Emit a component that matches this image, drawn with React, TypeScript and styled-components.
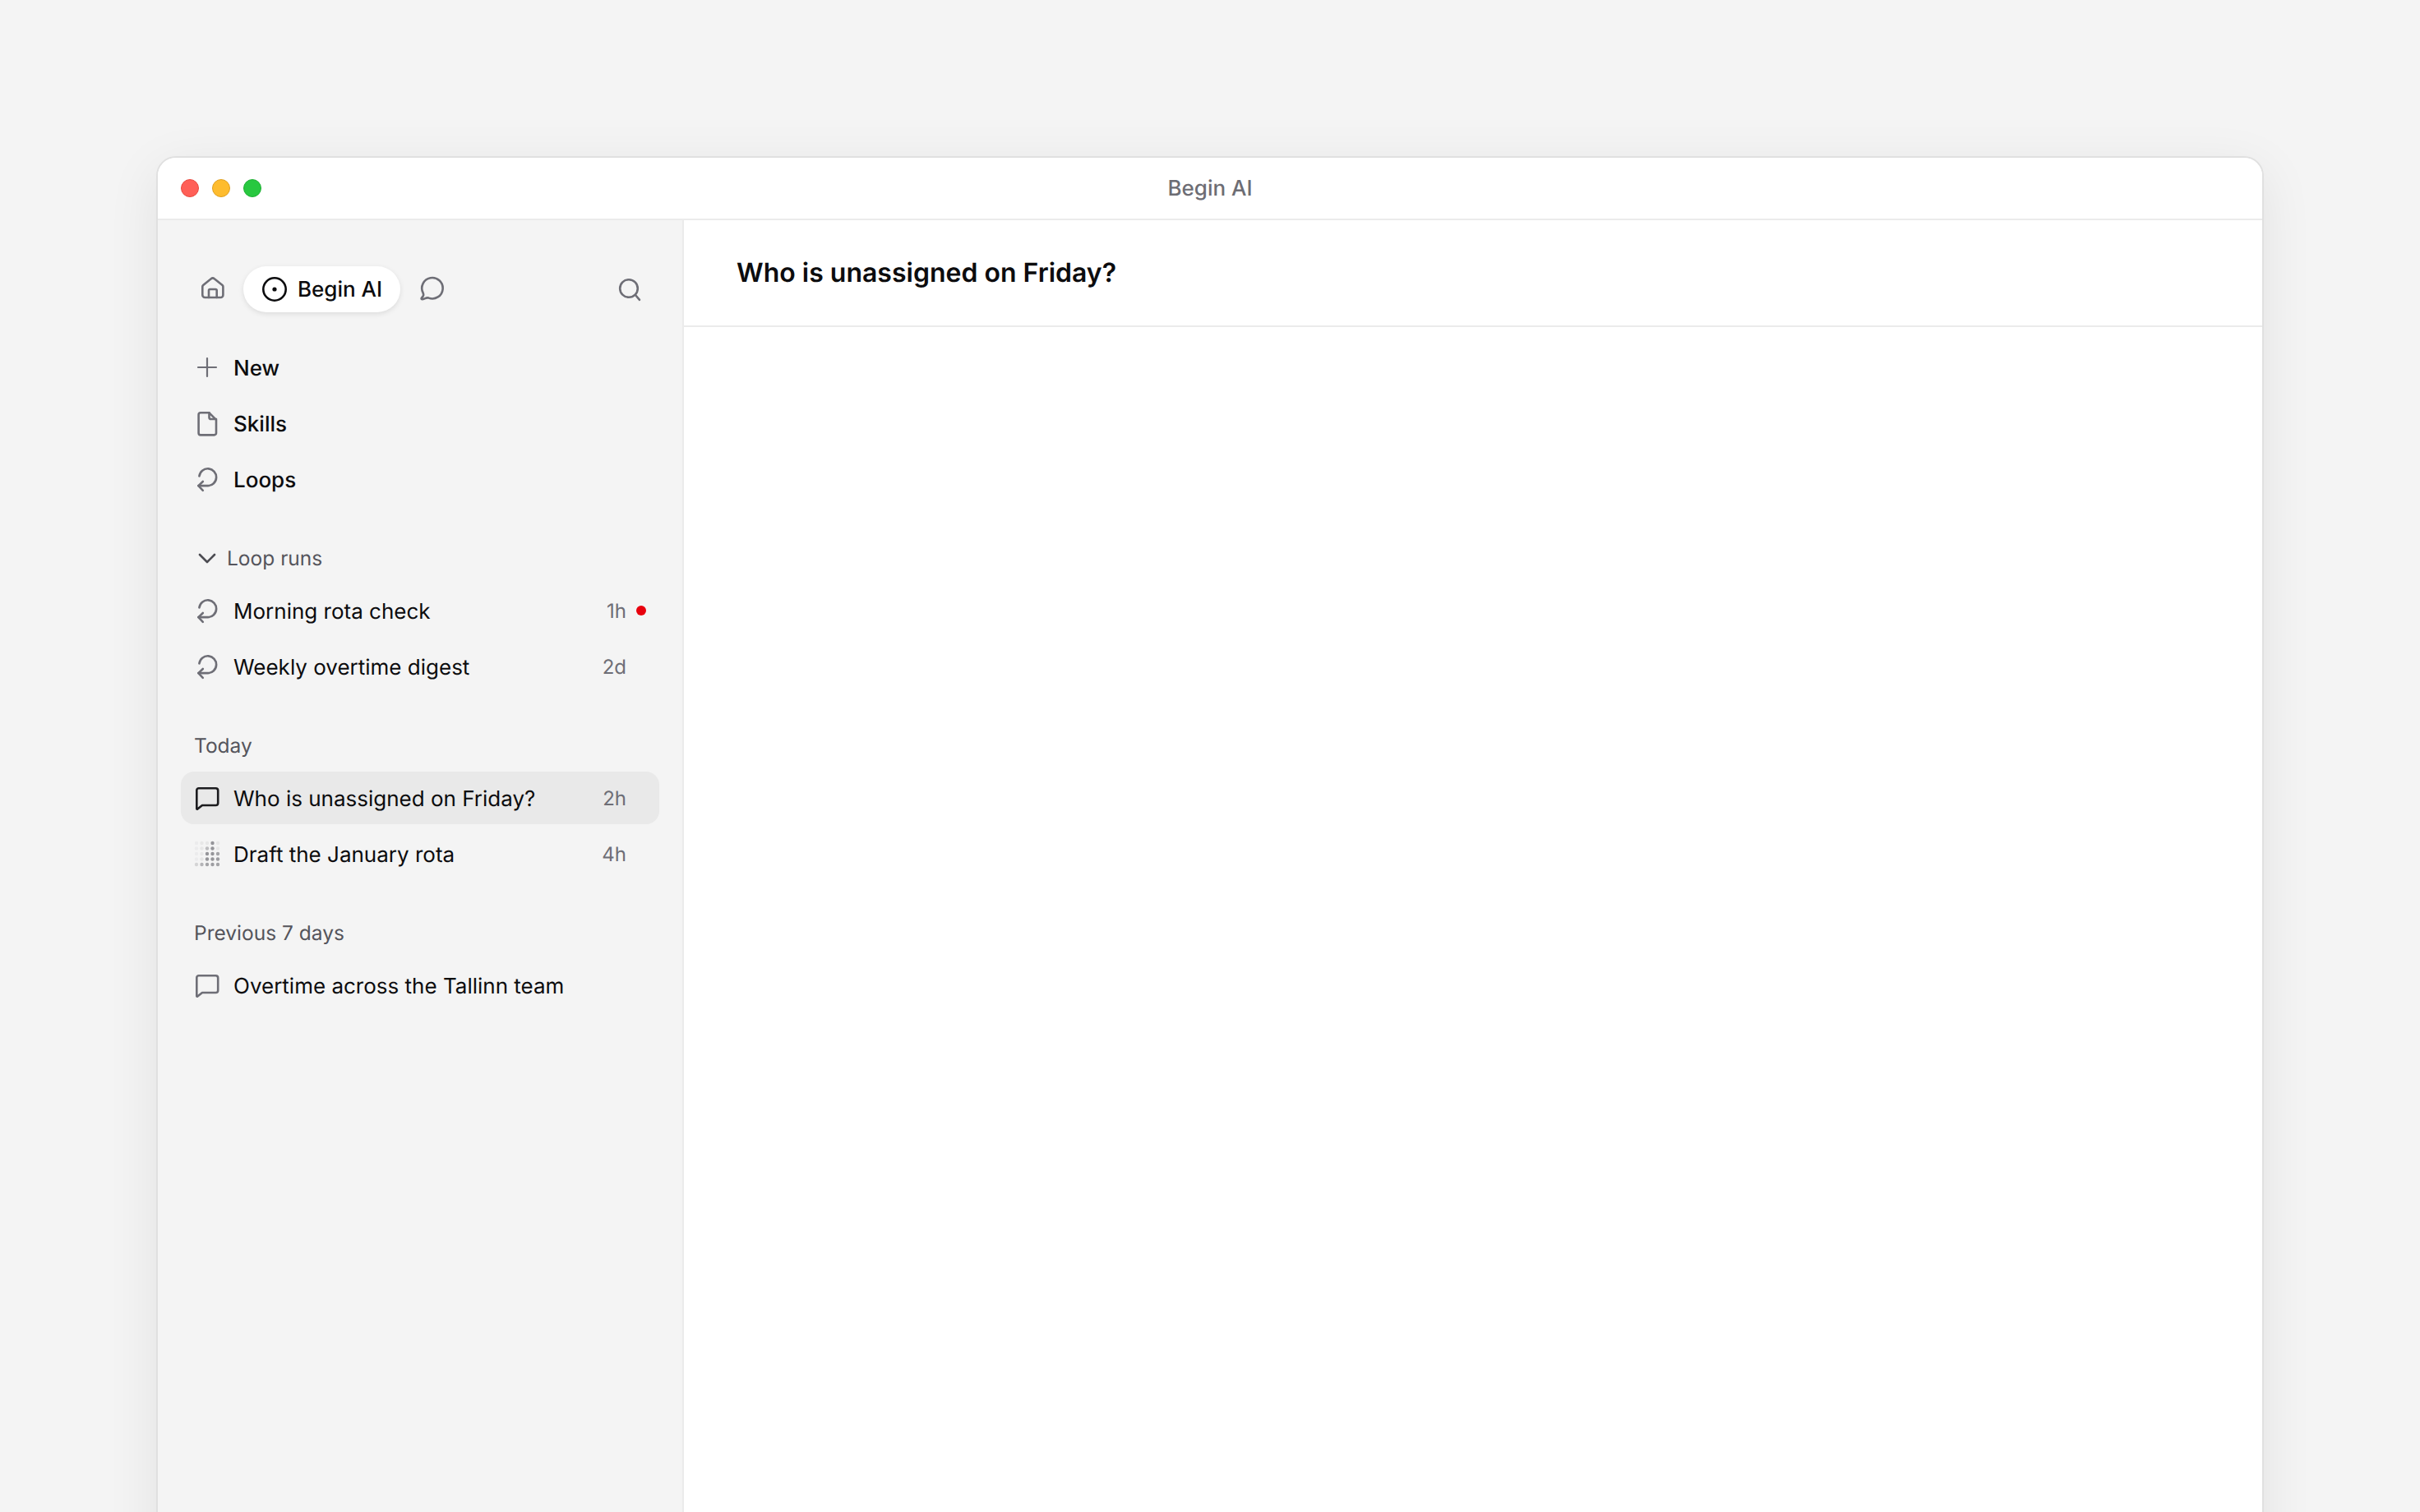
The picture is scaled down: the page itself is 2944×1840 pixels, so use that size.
import React from 'react';
import styled, { createGlobalStyle } from 'styled-components';

const GlobalStyle = createGlobalStyle`
  html, body {
    margin: 0;
    padding: 0;
    height: 1840px;
    overflow: hidden;
    background: #f4f4f4;
    text-rendering: geometricPrecision;
    -webkit-font-smoothing: antialiased;
  }
  * { box-sizing: border-box; }
`;

const iconProps = {
  viewBox: '0 0 32 32',
  fill: 'none',
  stroke: 'currentColor',
  strokeWidth: 2.6,
  strokeLinecap: 'round' as const,
  strokeLinejoin: 'round' as const,
};

const HomeIcon = () => (
  <svg {...iconProps} width="32" height="32">
    <path d="M4.300 12.800c0-.8.3-1.400.9-1.900L14.800 3.200a3 3 0 0 1 4 0l9.700 7.700c.6.5.9 1.100.9 1.900V23a3 3 0 0 1-3 3H7.300a3 3 0 0 1-3-3Z" />
    <path d="M12 26V17.500a1.500 1.500 0 0 1 1.500-1.500h6.700a1.500 1.500 0 0 1 1.500 1.500V26" />
  </svg>
);
const TargetIcon = () => (
  <svg {...iconProps} width="32" height="32">
    <circle cx="16" cy="16" r="13.700" />
    <circle cx="16" cy="16" r="2.600" fill="currentColor" stroke="none" />
  </svg>
);
const BubbleIcon = () => (
  <svg {...iconProps} width="32" height="32">
    <path d="M12.500 26.600A12.700 12.700 0 1 0 5.600 20.400c.6 1.300.9 2.400.2 3.800-.5 1-1.500 1.800-2 2.700-.4.8 0 1.400.9 1.400 1.200 0 2.400-.7 3.500-1.200 1.400-.6 2.500-1 4.300-.5Z" />
  </svg>
);
const SearchIcon = () => (
  <svg {...iconProps} width="32" height="32">
    <circle cx="15" cy="15" r="10.800" />
    <path d="M23 23l5 5.800" />
  </svg>
);
const PlusIcon = () => (
  <svg {...iconProps} strokeWidth={2.2} width="32" height="32">
    <path d="M16 5v22M5 16h22" />
  </svg>
);
const FileIcon = () => (
  <svg {...iconProps} width="32" height="32">
    <path d="M8 3.300h10.500L27 11.800V28a2.400 2.400 0 0 1-2.400 2.400H8A2.400 2.400 0 0 1 5.600 28V5.700A2.400 2.400 0 0 1 8 3.300Z" />
    <path d="M18.500 3.300V9a2 2 0 0 0 2 2H27" />
  </svg>
);
const LoopIcon = () => (
  <svg {...iconProps} width="32" height="32">
    <path d="M6.400 12.500A10.400 10.400 0 1 1 16.700 24.100H5.400" />
    <path d="M10.800 19 5.400 24.100l5.400 5.700" />
  </svg>
);
const ChevronIcon = () => (
  <svg {...iconProps} width="28" height="28" viewBox="0 0 28 28">
    <path d="M5 10l9 9 9-9" />
  </svg>
);
const ChatIcon = () => (
  <svg {...iconProps} width="32" height="32">
    <path d="M5.800 4.300h20.600a2.800 2.800 0 0 1 2.800 2.800v15.100a2.800 2.800 0 0 1-2.800 2.800H10L4.300 29.600a.6.6 0 0 1-1-.5V6.800a2.500 2.500 0 0 1 2.500-2.500Z" />
  </svg>
);

const dotLevels = [
  [0.05, 0.08, 0.08, 0.6, 0.08],
  [0.05, 0.08, 0.35, 0.6, 0.08],
  [0.05, 0.08, 0.6, 0.6, 0.5],
  [0.05, 0.1, 0.6, 0.6, 0.55],
  [0.2, 0.4, 0.5, 0.55, 0.5],
];

const DotsIcon = () => (
  <svg width="32" height="32" viewBox="0 0 32 32">
    {dotLevels.map((row, y) =>
      row.map((opacity, x) => (
        <circle key={`${x}-${y}`} cx={3 + x * 6.5} cy={3 + y * 6.5} r="2.200" fill="#55555c" opacity={opacity} />
      ))
    )}
  </svg>
);

const Stage = styled.div`
  padding: 190px 190px 0 190px;
  height: 1840px;
  overflow: hidden;
  background: #f4f4f4;
`;

const Window = styled.div`
  width: 2564px;
  height: 1800px;
  background: #fff;
  border: 2px solid #e0e0e0;
  border-radius: 24px;
  overflow: hidden;
  box-shadow: 0 16px 64px rgba(0, 0, 0, 0.08);
`;

const TitleBar = styled.div`
  position: relative;
  height: 76px;
  display: flex;
  align-items: center;
  justify-content: center;
  border-bottom: 2px solid #ebebeb;
  background: #fff;
`;

const Lights = styled.div`
  position: absolute;
  left: 28px;
  top: 26px;
  display: flex;
  gap: 16px;
`;

const Light = styled.span<{ $color: string; $edge: string }>`
  width: 22px;
  height: 22px;
  border-radius: 50%;
  background: ${(p) => p.$color};
  border: 1px solid ${(p) => p.$edge};
`;

const WindowTitle = styled.div`
  font: 500 26px Inter, sans-serif;
  color: #6d6d74;
`;

const Body = styled.div`
  display: flex;
  height: 1722px;
`;

const Sidebar = styled.aside`
  width: 640px;
  flex-shrink: 0;
  padding: 56px 28px 0 28px;
  background: #f4f4f4;
  border-right: 2px solid #ebebeb;
`;

const TopBar = styled.div`
  display: flex;
  align-items: center;
  height: 56px;
  margin-bottom: 35px;
`;

const TopIcon = styled.span<{ $gap?: number; $end?: number }>`
  display: flex;
  width: 32px;
  height: 32px;
  color: #6e6e76;
  margin-left: ${(p) => p.$gap ?? 0}px;
  margin-right: ${(p) => p.$end ?? 0}px;
`;

const Pill = styled.div`
  display: flex;
  align-items: center;
  gap: 12px;
  height: 56px;
  margin-left: 22px;
  padding: 0 22px;
  border-radius: 28px;
  background: #fff;
  color: #0c0c0e;
  font: 500 26px Inter, sans-serif;
  box-shadow: 0 2px 6px rgba(0, 0, 0, 0.1);
`;

const Spacer = styled.div`
  flex: 1;
`;

const List = styled.div`
  display: flex;
  flex-direction: column;
  gap: 4px;
`;

const Row = styled.div<{ $active?: boolean; $weight?: number }>`
  display: flex;
  align-items: center;
  height: 64px;
  padding-left: 16px;
  border-radius: 16px;
  background: ${(p) => (p.$active ? '#e9e9e9' : 'transparent')};
  color: #0c0c0e;
  font: ${(p) => p.$weight ?? 400} 26px Inter, sans-serif;
`;

const RowIcon = styled.span<{ $dark?: boolean }>`
  display: flex;
  width: 32px;
  height: 32px;
  margin-right: 16px;
  color: ${(p) => (p.$dark ? '#1c1c1f' : '#6e6e76')};
`;

const RowText = styled.span`
  flex: 1;
  padding-top: 2px;
`;

const Age = styled.span`
  width: 80px;
  padding-top: 1px;
  text-align: right;
  font-size: 24px;
  color: #6e6e76;
`;

const AgeSlot = styled.span`
  display: flex;
  align-items: center;
  width: 40px;
  padding-left: 12px;
`;

const Dot = styled.span`
  width: 12px;
  height: 12px;
  border-radius: 50%;
  background: #e8000d;
`;

const SectionLabel = styled.div`
  display: flex;
  align-items: center;
  height: 32px;
  margin: 48px 0 16px;
  padding-left: 16px;
  font: 400 24.5px Inter, sans-serif;
  color: #55555c;
`;

const ChevronWrap = styled.span`
  display: flex;
  margin: 0 10px 0 2px;
  color: #4c4c52;
`;

const Main = styled.main`
  flex: 1;
  background: #fff;
`;

const MainHeader = styled.header`
  display: flex;
  align-items: center;
  height: 130px;
  padding: 0 0 1px 64px;
  border-bottom: 2px solid #ebebeb;
  font: 600 32px Inter, sans-serif;
  color: #0c0c0e;
`;

export default function App() {
  return (
    <Stage>
      <GlobalStyle />
      <Window>
        <TitleBar>
          <Lights>
            <Light $color="#ff5f57" $edge="#e9493f" />
            <Light $color="#febc2e" $edge="#e0a020" />
            <Light $color="#28c840" $edge="#1fb034" />
          </Lights>
          <WindowTitle>Begin AI</WindowTitle>
        </TitleBar>
        <Body>
          <Sidebar>
            <TopBar>
              <TopIcon $gap={22}><HomeIcon /></TopIcon>
              <Pill><TargetIcon />Begin AI</Pill>
              <TopIcon $gap={22}><BubbleIcon /></TopIcon>
              <Spacer />
              <TopIcon $end={20}><SearchIcon /></TopIcon>
            </TopBar>
            <List>
              <Row $weight={500}><RowIcon><PlusIcon /></RowIcon><RowText>New</RowText></Row>
              <Row $weight={500}><RowIcon><FileIcon /></RowIcon><RowText>Skills</RowText></Row>
              <Row $weight={500}><RowIcon><LoopIcon /></RowIcon><RowText>Loops</RowText></Row>
            </List>
            <SectionLabel><ChevronWrap><ChevronIcon /></ChevronWrap>Loop runs</SectionLabel>
            <List>
              <Row><RowIcon><LoopIcon /></RowIcon><RowText>Morning rota check</RowText><Age>1h</Age><AgeSlot><Dot /></AgeSlot></Row>
              <Row><RowIcon><LoopIcon /></RowIcon><RowText>Weekly overtime digest</RowText><Age>2d</Age><AgeSlot /></Row>
            </List>
            <SectionLabel>Today</SectionLabel>
            <List>
              <Row $active><RowIcon $dark><ChatIcon /></RowIcon><RowText>Who is unassigned on Friday?</RowText><Age>2h</Age><AgeSlot /></Row>
              <Row><RowIcon><DotsIcon /></RowIcon><RowText>Draft the January rota</RowText><Age>4h</Age><AgeSlot /></Row>
            </List>
            <SectionLabel>Previous 7 days</SectionLabel>
            <List>
              <Row><RowIcon><ChatIcon /></RowIcon><RowText>Overtime across the Tallinn team</RowText></Row>
            </List>
          </Sidebar>
          <Main>
            <MainHeader>Who is unassigned on Friday?</MainHeader>
          </Main>
        </Body>
      </Window>
    </Stage>
  );
}
